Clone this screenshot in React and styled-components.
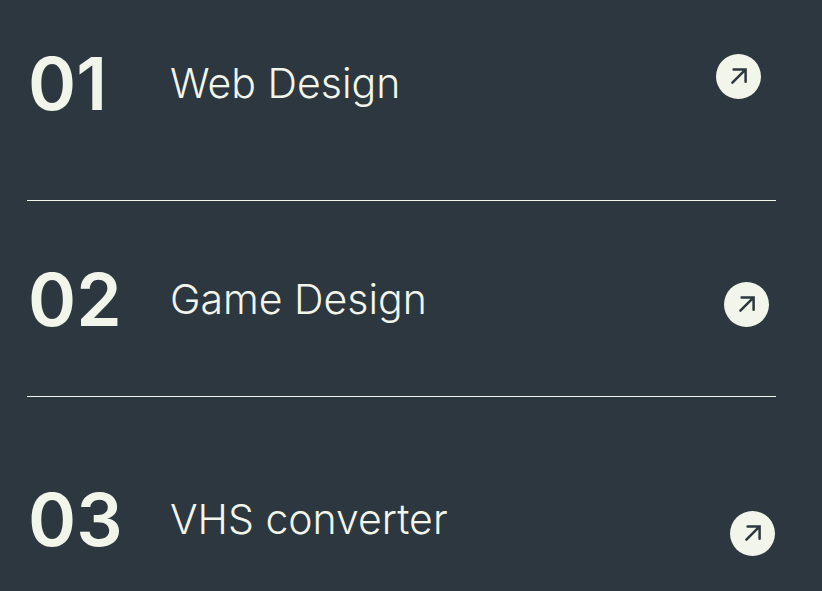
import React from "react";
import styled, { createGlobalStyle } from "styled-components";

const GlobalStyle = createGlobalStyle`
  *, *::before, *::after { box-sizing: border-box; }
  body {
    margin: 0;
    background: #2d373f;
    color: #f2f5ea;
    font-family: Inter, "Open Sans", sans-serif;
  }
`;

const ServiceList = styled.ol`
  list-style: none;
  margin: 0;
  padding: 0 46px 0 27px;
`;

const ServiceRow = styled.li`
  display: grid;
  grid-template-columns: 143px 1fr auto;
  align-items: start;
  padding: ${({ $top }) => $top}px 0 ${({ $bottom }) => $bottom}px;

  & + & { border-top: 1px solid #f2f5ea; }
`;

const Number = styled.span`
  padding-left: 1px;
  font-size: 73px;
  font-weight: 600;
  line-height: 80px;
`;

const Title = styled.h2`
  margin: 0;
  font-size: 41px;
  font-weight: 300;
  line-height: 78px;
`;

const ArrowLink = styled.a`
  display: grid;
  place-items: center;
  width: 45px;
  height: 45px;
  margin: ${({ $drop }) => $drop}px ${({ $inset }) => $inset}px 0 0;
  border-radius: 50%;
  background: #f2f5ea;
  color: #2d373f;
`;

const services = [
  { number: "01", title: "Web Design", top: 44, bottom: 76, drop: 10, inset: 15 },
  { number: "02", title: "Game Design", top: 59, bottom: 56, drop: 22, inset: 7 },
  { number: "03", title: "VHS converter", top: 83, bottom: 31, drop: 31, inset: 1 },
];

function ArrowIcon() {
  return (
    <svg
      width="19"
      height="19"
      viewBox="0 0 19 19"
      fill="none"
      stroke="currentColor"
      strokeWidth="2.5"
      strokeLinecap="round"
      aria-hidden="true"
    >
      <path d="M3.4 15.7 16.4 2.7M4.6 2.5h12v12.2" />
    </svg>
  );
}

export default function App() {
  return (
    <>
      <GlobalStyle />
      <ServiceList>
        {services.map((s) => (
          <ServiceRow key={s.number} $top={s.top} $bottom={s.bottom}>
            <Number>{s.number}</Number>
            <Title>{s.title}</Title>
            <ArrowLink href="#" aria-label={s.title} $drop={s.drop} $inset={s.inset}>
              <ArrowIcon />
            </ArrowLink>
          </ServiceRow>
        ))}
      </ServiceList>
    </>
  );
}
